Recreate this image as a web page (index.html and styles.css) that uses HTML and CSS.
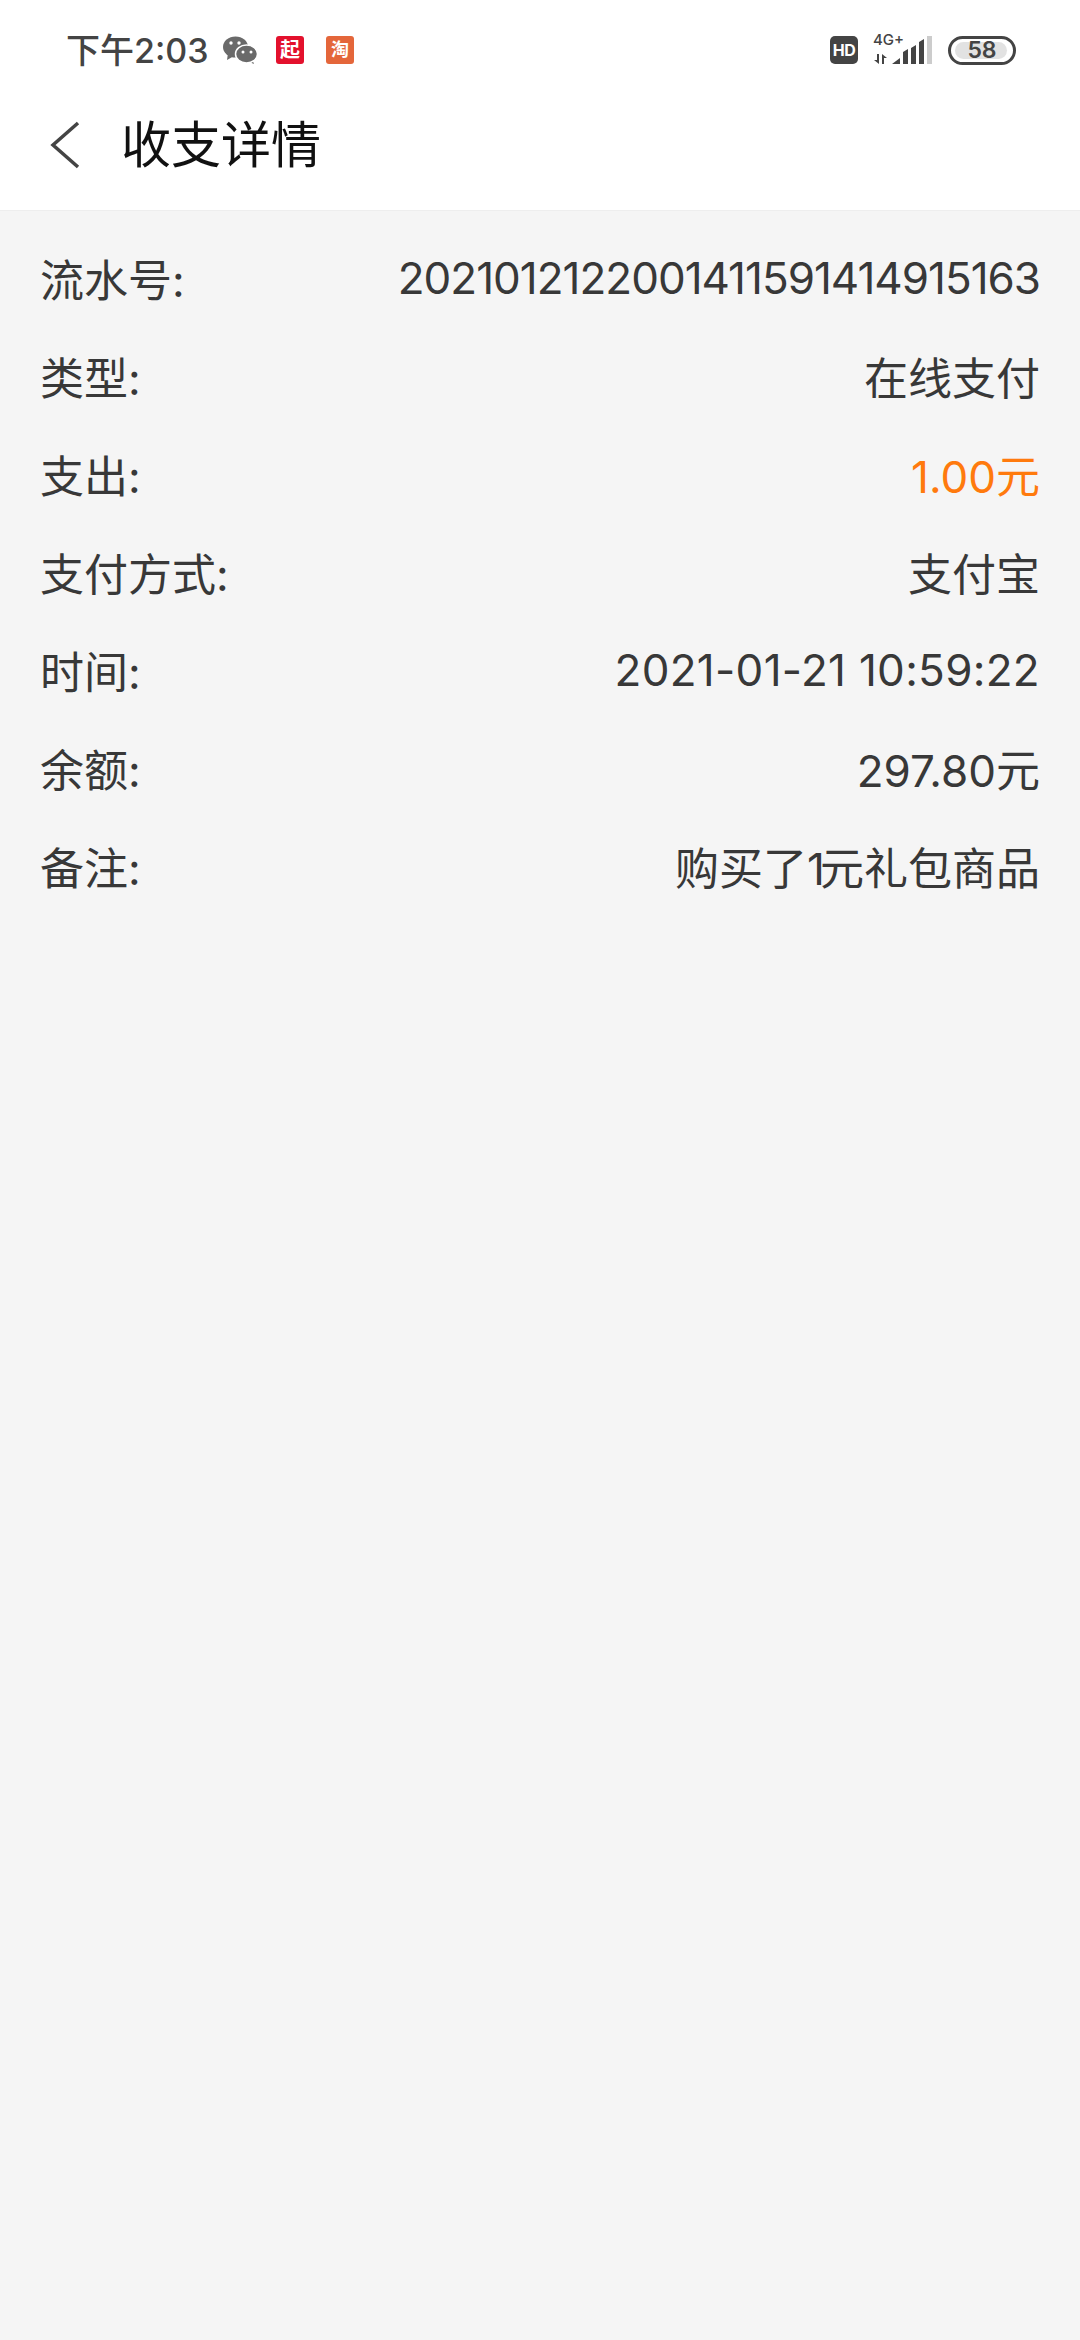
FILE: index.html
```html
<!DOCTYPE html>
<html lang="zh-CN">
<head>
  <meta charset="UTF-8" />
  <meta name="viewport" content="width=device-width, initial-scale=1.0"/>
  <title>收支详情</title>
  <link rel="stylesheet" href="styles.css">
</head>
<body>
  <div class="page">
    <div class="header">
      <div class="status-bar">
        <div class="status-left">
          <span class="clock">下午2:03</span>
          <svg class="wechat-icon" width="35" height="29" viewBox="0 0 35 29">
            <ellipse cx="12.500" cy="11" rx="12.500" ry="10.500" fill="#6a6a6a"/>
            <path d="M5 17 L4 24 L11 20 z" fill="#6a6a6a"/>
            <path d="M29 23 L31 28 L24 25 z" fill="#6a6a6a"/>
            <ellipse cx="23.500" cy="18" rx="11" ry="9" fill="#6a6a6a" stroke="#fff" stroke-width="1.500"/>
            <circle cx="8" cy="7" r="1.700" fill="#fff"/>
            <circle cx="16" cy="7" r="1.700" fill="#fff"/>
            <circle cx="20" cy="16" r="1.500" fill="#fff"/>
            <circle cx="28" cy="16" r="1.500" fill="#fff"/>
          </svg>
          <span class="app-badge app-red">起</span>
          <span class="app-badge app-orange">淘</span>
        </div>
        <div class="status-right">
          <span class="hd-badge">HD</span>
          <svg class="network" width="62" height="48" viewBox="0 -8 62 48">
            <text x="1" y="11" class="net-label">4G+</text>
            <path fill="#444" d="M5 20h2v10l-5-4h3zM10 30V20l5 4h-3v6z"/>
            <path fill="#444" d="M20 30l8-6v6zM31 30V18l5-3v15zM39 30V14l5-3v19zM47 30V8l5-3v25z"/>
            <rect x="55" y="2" width="5" height="28" fill="#ccc"/>
          </svg>
          <div class="battery">
            <span class="battery-fill"></span>
            <span class="battery-num">58</span>
          </div>
        </div>
      </div>
      <div class="nav-bar">
        <svg class="back-icon" width="32" height="48" viewBox="0 0 32 48">
          <path d="M29 2 L4 24 L29 46" fill="none" stroke="#444" stroke-width="3.500"/>
        </svg>
        <h1 class="nav-title">收支详情</h1>
      </div>
    </div>

    <div class="detail-list">
      <div class="detail-row"><span>流水号:</span><span class="serial">2021012122001411591414915163</span></div>
      <div class="detail-row"><span>类型:</span><span>在线支付</span></div>
      <div class="detail-row"><span>支出:</span><span class="amount-out">1.00元</span></div>
      <div class="detail-row"><span>支付方式:</span><span>支付宝</span></div>
      <div class="detail-row"><span>时间:</span><span class="date-value">2021-01-21 10:59:22</span></div>
      <div class="detail-row"><span>余额:</span><span>297.80元</span></div>
      <div class="detail-row"><span>备注:</span><span>购买了<span class="tight-digit">1</span>元礼包商品</span></div>
    </div>
  </div>
</body>
</html>
```

FILE: styles.css
```css
body {
  margin: 0;
  font-family: Inter, "Noto Sans CJK SC", sans-serif;
  background-color: #f5f5f5;
  color: #383838;
}

.page {
  width: 1080px;
  height: 2340px;
  overflow: hidden;
}

.header {
  height: 211px;
  background-color: #fff;
  border-bottom: 1px solid #eee;
  box-sizing: border-box;
}

.status-bar {
  height: 100px;
  padding: 0 64px 0 66px;
  display: flex;
  justify-content: space-between;
  align-items: center;
}

.status-left, .status-right {
  display: flex;
  align-items: center;
}

.clock {
  font-size: 34px;
  font-weight: 500;
  color: #444;
  width: 157px;
  margin-bottom: 4px;
}

.wechat-icon {
  margin-right: 18px;
}

.app-badge {
  width: 28px;
  height: 28px;
  border-radius: 3px;
  color: #fff;
  font-size: 20px;
  font-weight: 700;
  line-height: 28px;
  text-align: center;
  margin-right: 22px;
}

.app-red {
  background-color: #e3112d;
}

.app-orange {
  background-color: #e4663a;
  font-size: 18px;
}

.hd-badge {
  width: 28px;
  height: 28px;
  border-radius: 5px;
  background-color: #444;
  color: #fff;
  font-size: 16px;
  font-weight: 700;
  letter-spacing: -0.5px;
  line-height: 28px;
  text-align: center;
  margin-right: 14px;
}

.network {
  margin-right: 14px;
}

.net-label {
  font-size: 15px;
  font-weight: 500;
  fill: #444;
}

.battery {
  position: relative;
  width: 68px;
  height: 29px;
  box-sizing: border-box;
  border: 3px solid #444;
  border-radius: 15px;
  display: flex;
  align-items: center;
  justify-content: center;
}

.battery-fill {
  position: absolute;
  top: 3px;
  bottom: 3px;
  left: 4px;
  width: 52px;
  border-radius: 10px;
  background-color: #e2e2e2;
}

.battery-num {
  position: relative;
  font-size: 23px;
  font-weight: 600;
  color: #444;
}

.nav-bar {
  height: 90px;
  padding-left: 49px;
  display: flex;
  align-items: center;
}

.back-icon {
  margin-right: 40px;
}

.nav-title {
  margin: 0 0 8px;
  font-size: 50px;
  font-weight: 400;
  color: #111;
}

.detail-list {
  padding: 18px 40px 0;
}

.detail-row {
  height: 98px;
  display: flex;
  justify-content: space-between;
  align-items: center;
  font-size: 44px;
}

.serial {
  letter-spacing: -1px;
}

.date-value {
  letter-spacing: 0.3px;
}

.tight-digit {
  letter-spacing: -5px;
}

.amount-out {
  color: #ff7a0d;
}
```
